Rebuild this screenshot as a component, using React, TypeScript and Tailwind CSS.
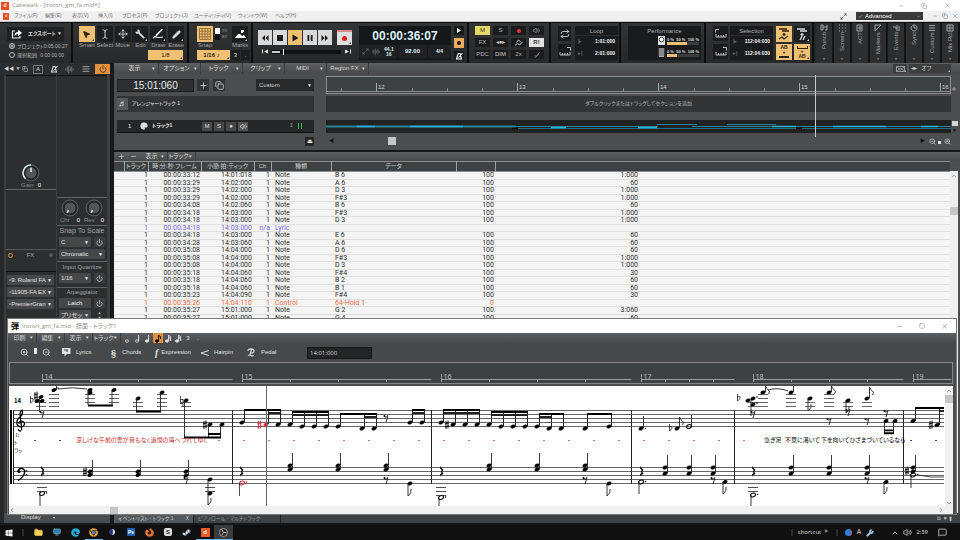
import React from "react";
import {
  AlignJustify, AudioLines, Check, ChevronDown, ChevronLeft, ChevronRight, ChevronUp, Copy, Folder,
  Maximize2, MessageSquare, Minus, Monitor, Move, MousePointer2, Palette, Pencil, Plus, Power, Repeat,
  Square, TextCursor, Volume2, Wrench, X, ZoomIn, ZoomOut,
} from "lucide-react";
import { FaSteamSymbol, FaFirefoxBrowser, FaEdge, FaChrome, FaWindows } from "react-icons/fa";

const amber = "bg-[#f0c073] text-[#2b2112]";
const dark = "bg-[#1d1e1f] text-[#dcdddd]";

/* ---------- shared bits ---------- */
function Corner() {
  return <span className="absolute right-px bottom-px size-0 border-b-2 border-l-2 border-b-current border-l-transparent" />;
}

function Module({ className = "", children }: { className?: string; children: React.ReactNode }) {
  return (
    <section className={`h-full shrink-0 border-r-2 border-[#0c0d0e] bg-linear-to-b from-[#323436] to-[#27282a] ${className}`}>
      {children}
    </section>
  );
}

function Drop({ label, w, value }: { label: string; w: string; value: string }) {
  return (
    <div className={`relative ${w}`}>
      <select aria-label={label} className="block h-[10px] w-full appearance-none rounded-[1px] bg-[#454748] py-0 pr-[8px] pl-[2px] text-[6px] leading-[10px] text-[#e4e4e4]">
        <option>{value}</option>
      </select>
      <span className="pointer-events-none absolute top-0 right-[2px] text-[5px] leading-[10px] text-[#eee]">▼</span>
    </div>
  );
}

/* ---------- application header ---------- */
function TitleBar() {
  return (
    <header className="flex h-[11px] shrink-0 items-center bg-white pr-[9px] pl-px text-[#8e8e8e]">
      <span className="mr-[3px] flex size-[8px] items-center justify-center bg-[#ee4d23] text-[5px] font-bold text-white">d</span>
      <h1 className="flex-1 font-['Open_Sans'] text-[6px] leading-[11px]">Cakewalk - [irotori_gm_fa.mid*]</h1>
      <div className="flex gap-[17px]">
        <button aria-label="Minimize"><Minus size={6} /></button>
        <button aria-label="Restore"><Copy size={6} /></button>
        <button aria-label="Close"><X size={7} /></button>
      </div>
    </header>
  );
}

const menus: [string, string][] = [
  ["ファイル(F)", "w-[31px]"], ["編集(E)", "w-[27px]"], ["表示(V)", "w-[26px]"], ["挿入(I)", "w-[24px]"],
  ["プロセス(P)", "w-[33px]"], ["プロジェクト(J)", "w-[39px]"], ["ユーティリティ(U)", "w-[44px]"],
  ["ウィンドウ(W)", "w-[37px]"], ["ヘルプ(H)", "w-[30px]"],
];

function MenuBar() {
  return (
    <nav className="flex h-[11px] shrink-0 items-center border-b border-[#c8c8c8] bg-[#f0f0f0] pr-[2px] pl-[3px] text-[5px] text-[#757575]">
      <span className="mr-[5px] flex h-[7px] w-[6px] items-center justify-center bg-[#ee4d23] text-[4px] text-white">d</span>
      {menus.map(([m, w]) => (
        <button key={m} className={`text-left whitespace-nowrap ${w}`}>{m}</button>
      ))}
      <Maximize2 size={7} className="mr-[9px] ml-auto text-[#333]" />
      <div className="relative mr-[9px] w-[67px]">
        <select aria-label="Workspace" className="block h-[8px] w-full appearance-none bg-[#3a3a3a] py-0 pl-[9px] text-[6px] leading-[8px] text-white">
          <option>Advanced</option>
        </select>
        <ChevronDown size={5} className="absolute top-[2px] right-[2px] text-[#ccc]" />
        <Check size={5} className="absolute top-[2px] left-[2px] text-white" />
      </div>
      <div className="flex gap-[4px] text-[#66859a]">
        <button aria-label="Minimize document"><Minus size={6} /></button>
        <button aria-label="Restore document"><Copy size={6} /></button>
        <button aria-label="Close document"><X size={6} /></button>
      </div>
    </nav>
  );
}

/* ---------- control bar ---------- */
function ExportModule() {
  return (
    <Module className="w-[73px] px-[7px] pt-[4px] text-[#d8d9da]">
      <button className="flex h-[14px] w-full items-center bg-[#1f2021] pr-[2px] pl-[4px] text-[5px]">
        <svg width="11" height="10" viewBox="0 0 11 10"><path d="M4 2H1.500v7H9V7" fill="none" stroke="#e8e8e8" strokeWidth="1.200" /><path d="M3.500 7q0-4 3.500-4V.500L11 4L7 7V5Q5 5 3.500 7z" fill="#fff" /></svg>
        <span className="ml-[6px] flex-1 text-left font-bold whitespace-nowrap">エクスポート</span>
        <span className="text-[5px]">▼</span>
      </button>
      {[["プロジェクト", "0:05:00:27"], ["選択範囲", "0:00:00:00"]].map(([a, b], i) => (
        <label key={a} className="mt-px flex h-[8px] items-center text-[5px] leading-[8px] whitespace-nowrap text-[#b5b5b5]">
          <input
            type="radio" name="range" defaultChecked={i === 0}
            className="mr-[2px] ml-[2px] size-[6px] shrink-0 appearance-none rounded-full border border-[#bbb] checked:bg-[#ddd] checked:shadow-[inset_0_0_0_1px_#222]"
          />
          <span>{a}</span>
          <span className="ml-auto">{b}</span>
        </label>
      ))}
    </Module>
  );
}

const tools = [
  { n: "Smart", i: <MousePointer2 size={9} fill="currentColor" /> },
  { n: "Select", i: <TextCursor size={10} /> },
  { n: "Move", i: <Move size={10} /> },
  { n: "Edit", i: <svg width="10" height="10" viewBox="0 0 10 10"><path d="M2.500 0.500L2.500 2.500L1 3L0.500 2.500Q0 5 3.500 4.800L8.500 9.800L9.800 8.500L4.800 3.500Q5 0.200 2.500 0.500Z" fill="currentColor" /></svg> },
  { n: "Draw", i: <svg width="11" height="10" viewBox="0 0 11 10"><path d="M9.500 0L4 6L3 7L3.400 5.500Z M0.500 9.500Q1 7 3 8T10 8" fill="none" stroke="currentColor" strokeWidth="1.200" /></svg> },
  { n: "Erase", i: <Pencil size={9} fill="currentColor" /> },
];

function ToolsModule() {
  return (
    <Module className="flex w-[116px] flex-col pt-[3px] pr-[2px] pl-[5px]">
      <div className="flex">
        {tools.map(({ n, i }, k) => (
          <div key={n} className="flex w-[18px] flex-col items-center">
            <button aria-label={n} className={`relative flex size-[16px] items-center justify-center ${k === 0 ? amber : dark}`}>
              {i}
              {k !== 1 && k !== 2 && <Corner />}
            </button>
            <span className="text-[6px] leading-[7px] text-[#a4a5a6]">{n}</span>
          </div>
        ))}
      </div>
      <button className={`relative mt-px mr-[2px] h-[10px] w-[35px] self-end text-[6px] leading-[10px] ${amber}`}>1/8<Corner /></button>
    </Module>
  );
}

function SnapModule() {
  return (
    <Module className="w-[64px] pt-[3px] pl-[8px] text-[#a4a5a6]">
      <div className="flex">
        <div className="w-[16px] text-center">
          <button aria-label="Snap to grid" className={`flex size-[16px] items-center justify-center ${amber}`}>
            <svg width="12" height="12" viewBox="0 0 12 12"><path d="M.5.5h11v11H.5zM3.2 0v12M6 0v12M8.8 0v12M0 3.2h12M0 6h12M0 8.8h12" fill="none" stroke="#9a7340" strokeWidth="1" /></svg>
          </button>
          <span className="block text-[6px] leading-[7px]">Snap</span>
        </div>
        <div className="mt-[2px] ml-[2px] h-[12px] w-[5px] bg-[#111]"><div className="h-[6px] bg-white" /></div>
        <div className="mt-[2px] ml-[2px] w-[8px] text-[4px] leading-[6px]">TO<br />BY</div>
        <div className="ml-[2px] w-[16px] text-center">
          <button aria-label="Marks" className={`relative flex size-[16px] items-center justify-center ${dark}`}>
            <svg width="11" height="10" viewBox="0 0 11 10"><path d="M0 9L3 5H5L7 7L9 6L11 9Z M6 1h3v2H8v1H6z" fill="#fff" /></svg>
            <Corner />
          </button>
          <span className="block text-[6px] leading-[7px]">Marks</span>
        </div>
      </div>
      <div className="mt-px flex gap-px text-[6px] leading-[10px]">
        <button className={`relative h-[10px] w-[33px] pr-[4px] font-bold ${amber}`}>1/16 ♪<Corner /></button>
        <button className={`h-[10px] w-[9px] ${dark}`}>3</button>
        <button className={`h-[10px] w-[9px] ${dark}`}>.</button>
      </div>
    </Module>
  );
}

function Metronome() {
  return <svg width="8" height="8" viewBox="0 0 8 8"><path d="M1.500 7L3.200 1.500H5L6.500 7ZM3.500 5.500L7.500 1" fill="none" stroke="currentColor" strokeWidth="1.100" /></svg>;
}

function Transport() {
  const pads: [string, string, string][] = [
    ["Rewind", "M1 4l3-3v6zM4.500 4l3-3v6z", "0"], ["Stop", "M1 1h6v6H1z", "0"], ["Play", "M1.500 0.500l6 3.500l-6 3.500z", "1"],
    ["Pause", "M1.500 1h1.800v6H1.500zM4.800 1h1.800v6H4.800z", "0"], ["Forward", "M.500 1l3 3l-3 3zM4 1l3 3l-3 3z", "0"],
  ];
  return (
    <Module className="flex w-[216px] pt-[3px] pl-[5px]">
      <div className="w-[101px] pt-[4px]">
        <div className="flex gap-px">
          {pads.map(([n, d, on]) => (
            <button key={n} aria-label={n} className={`flex h-[15px] w-[14px] items-center justify-center ${on === "1" ? "bg-[#f0c073]" : "bg-[#d9d9da]"}`}>
              <svg width="8" height="8" viewBox="0 0 8 8"><path d={d} fill="#1b1b1b" /></svg>
            </button>
          ))}
          <button aria-label="Record" className="relative ml-[4px] flex h-[15px] w-[15px] items-center justify-center border-t-2 border-[#d98b8b] bg-[#dedede] text-[#333]">
            <span className="size-[5px] rounded-full bg-[#e01b22]" /><Corner />
          </button>
        </div>
        <div className="mt-[4px] flex items-center text-[#e4e4e4]">
          <svg width="6" height="6" viewBox="0 0 6 6" className="ml-[4px]"><path d="M0 .500h1v4H0zM6 .500v4L2 2.500z" fill="currentColor" /></svg>
          <div className="mx-[4px] flex h-[4px] flex-1 items-center bg-[#0f1010]">
            <span className="h-[2px] w-[8px] bg-[#ccc]" /><span className="ml-[3px] h-[6px] w-px bg-white" />
          </div>
          <svg width="6" height="6" viewBox="0 0 6 6" className="mr-[8px]"><path d="M5 .500h1v4H5zM0 .500v4l4-2z" fill="currentColor" /></svg>
        </div>
      </div>
      <div className="h-[34px] w-[92px] bg-[#161718] text-[#d9f0f8]">
        <div className="pt-[3px] text-center text-[12px] leading-[15px] font-bold">00:00:36:07</div>
        <div className="mt-px flex h-[13px] items-center gap-px text-[6px] font-bold">
          <div className="flex h-full w-[38px] items-center bg-[#202122] pl-[3px]">
            <Maximize2 size={7} className="text-[#777]" /><AudioLines size={8} className="ml-[3px] text-[#777]" />
            <span className="ml-[4px] text-center text-[5px] leading-[5px]">44.1<br />16</span>
          </div>
          <div className="flex h-full w-[29px] items-center justify-center bg-[#202122] text-[6px]">92.00</div>
          <div className="flex h-full flex-1 items-center justify-center bg-[#202122] text-[5px]">4/4</div>
        </div>
      </div>
      <div className="ml-[3px] flex flex-col gap-[3px] text-[6px]">
        <button aria-label="Audition" className="flex h-[9px] w-[10px] items-center justify-center bg-[#18191a] text-white"><svg width="4" height="5"><path d="M0 0l4 2.500l-4 2.500z" fill="#fff" /></svg></button>
        <button aria-label="Click" className="flex h-[10px] w-[10px] items-center justify-center bg-[#e9ad5d]"><span className="size-[4px] rounded-full bg-[#111]" /></button>
        <button aria-label="Metronome" className="flex h-[9px] w-[10px] items-center justify-center bg-[#18191a] text-white"><Metronome /></button>
      </div>
    </Module>
  );
}

function MixModule() {
  const cells: [string, React.ReactNode][] = [
    ["Mute", "M"], ["Solo", "S"], ["Arm", <span className="size-[4px] rounded-full bg-[#e5322b]" />], ["Echo", <Volume2 size={7} />],
    ["FX", "FX"], ["Automation", "◂●▸"],
    ["Write", <svg width="9" height="8" viewBox="0 0 9 8"><path d="M1 6.500l2.500-2l2 1.500l3-3M2.500 3.500l2-2.500l2 1.500" fill="none" stroke="#ccc" /></svg>],
    ["R!", "R!"], ["PDC", "PDC"], ["Dim", "DIM"], ["2x", "2x"],
    ["Fade", <svg width="8" height="8" viewBox="0 0 8 8"><path d="M1 5h2L7 1M2 7l4-4" fill="none" stroke="#666" /></svg>],
  ];
  return (
    <Module className="grid w-[82px] grid-cols-[repeat(4,15px)] content-start gap-[3px] pt-[3px] pl-[6px]">
      {cells.map(([n, c]) => (
        <button
          key={n} aria-label={n}
          className={`flex h-[9px] items-center justify-center text-[6px] leading-[9px] ${n === "Mute" ? "bg-[#e4d968] text-[#333]" : n === "R!" ? "bg-[#e2e2e2] font-bold text-[#333]" : n === "Dim" || n === "Automation" ? "bg-[#1a1b1c] text-[4px] text-[#ccc]" : "bg-[#1a1b1c] text-[#b5b6b7]"}`}
        >
          {c}
        </button>
      ))}
    </Module>
  );
}

function RangeBox({ title, from, to }: { title: string; from: string; to: string }) {
  return (
    <div className="h-[34px] w-[43px] bg-[#1a1b1c]">
      <div className="h-[10px] border-b border-[#2e2f30] text-center text-[6px] leading-[10px] text-[#b0b1b2]">{title}</div>
      {[from, to].map((v, i) => (
        <div key={i} className="flex h-[12px] items-center justify-between px-[3px] text-[5px] font-bold text-[#f0f0f0]">
          <span className="text-[#666]">{i ? "▸|" : "|▸"}</span>{v}
        </div>
      ))}
    </div>
  );
}

function Bracket({ flip }: { flip?: boolean }) {
  return (
    <svg width="12" height="9" viewBox="0 0 12 9"><path d={flip ? "M1 5v3h10V5M3.500 6v2M6 6v2M8.500 6v2M8 .500h3.500v3" : "M1 5v3h10V5M3.500 6v2M6 6v2M8.500 6v2M.500 3.500V.500H4"} fill="none" stroke="#bbb" strokeWidth="1" /></svg>
  );
}

function Meter({ fill }: { fill: string }) {
  return (
    <div className="w-[32px]">
      <div className="flex justify-between text-[4px] leading-[5px] font-bold text-[#ddd]"><span>0 %</span><span>50 %</span><span>100 %</span></div>
      <div className="h-[3px] bg-[#3c3d3e]"><div className={`h-full bg-[#f0c073] ${fill}`} /></div>
    </div>
  );
}

const sideTabs = ["Punch", "Screen", "ACT", "Markers", "Events", "Sync", "Custom", "Mix Rcl"];
const tabIcons = [
  "M1 1h2v5H1zM7 1v5H5M3 3h4", "M1 1h1M4 1h1M7 1h1M1 4h1M4 4h1M7 4h1M1 7h1M4 7h1M7 7h1", "M1 1h5v6H1zM3 3h2v2H3z", "M1 1h6L1 7z",
  "M1 3h3v2M5 1v6M7 2v5", "M4 1a3 3 0 1 0 .1 0M4 1.500V4h2", "M1 1.500h6M1 4h6M1 6.500h6", "M1 1h6v6H1zM4 1v6M1 4h6",
];

function ControlBar() {
  return (
    <div className="flex h-[41px] shrink-0 overflow-hidden border-t border-[#0c0d0e] bg-[#1a1b1c]">
      <ExportModule />
      <ToolsModule />
      <SnapModule />
      <Transport />
      <MixModule />
      <Module className="flex w-[70px] gap-[4px] pt-[3px] pl-[7px]">
        <div className="flex w-[13px] flex-col gap-[3px]">
          <button aria-label="Loop" className="flex h-[15px] items-center justify-center bg-[#1a1b1c] text-[#ddd]"><Repeat size={10} /></button>
          <button aria-label="Set loop to selection" className="flex h-[15px] items-center justify-center bg-[#1a1b1c]"><Bracket flip /></button>
        </div>
        <RangeBox title="Loop" from="1:01:000" to="2:01:000" />
      </Module>
      <Module className="w-[85px] pt-[3px] pl-[7px]">
        <div className="h-[34px] w-[73px] bg-[#1a1b1c] px-[2px]">
          <div className="h-[10px] text-center text-[6px] leading-[10px] text-[#b0b1b2]">Performance</div>
          <div className="flex items-center gap-[2px] pr-px pl-[28px]">
            <div className="flex flex-col gap-[3px]">
              <svg width="7" height="9" viewBox="0 0 7 9"><path d="M0 0h7v9H0z" fill="#ddd" /><circle cx="3.500" cy="3.500" r="2.300" fill="#fff" stroke="#444" /></svg>
              <svg width="7" height="9" viewBox="0 0 7 9"><path d="M1 0h5v9H1z" fill="#aaa" /><path d="M0 1h7M0 3h7M0 5h7M0 7h7" stroke="#666" /></svg>
            </div>
            <div className="flex flex-col gap-[4px]"><Meter fill="w-[20px]" /><Meter fill="w-[10px]" /></div>
          </div>
        </div>
      </Module>
      <Module className="flex w-[108px] pt-[3px] pl-[7px]">
        <div className="mr-[2px] flex w-[15px] flex-col gap-[3px]">
          <button aria-label="Selection start" className="flex h-[15px] items-center justify-center bg-[#1a1b1c]"><Bracket /></button>
          <button aria-label="Selection end" className="flex h-[15px] items-center justify-center bg-[#1a1b1c]"><Bracket flip /></button>
        </div>
        <RangeBox title="Selection" from="112:04:030" to="112:04:030" />
        <div className="ml-[3px] grid grid-cols-[16px_16px] content-start gap-[2px]">
          {["M2 2h8M5 4h7M7 6v3M5.500 7.500h3M2 12l3-2l2 2l4-3", "M2 2h8M5 4h7M7 6v3M5.500 7.500h3M5 13l2-4M8 13l2-4"].map((d, i) => (
            <button key={i} aria-label={i ? "Automation off" : "Select tracks"} className={`relative flex size-[16px] items-center justify-center ${i ? dark : amber}`}>
              <svg width="14" height="14" viewBox="0 0 14 14"><path d={d} fill="none" stroke="currentColor" strokeWidth="1.300" /></svg>{i === 1 && <Corner />}
            </button>
          ))}
          <button className={`flex h-[16px] flex-col items-center justify-center text-[5px] leading-[5px] font-bold ${amber}`}>AB<span>+</span><span className="my-px h-[2px] w-[10px] bg-[#2b2112]" /></button>
          <button className={`relative flex h-[16px] flex-col items-center justify-center text-[5px] leading-[5px] font-bold ${amber}`}><span className="h-[3px] w-[11px] border-x border-b border-[#2b2112]" /><span>+</span>AB<Corner /></button>
        </div>
      </Module>
      <div className="flex min-w-0 flex-1 bg-[#262729] pl-[2px]">
        {sideTabs.map((t, i) => (
          <button key={t} className="flex w-[18px] shrink-0 flex-col items-center border-r-2 border-[#131415] bg-[#2c2e30] pt-px text-[#a2a3a4]">
            <svg width="8" height="8" viewBox="0 0 8 8"><path d={tabIcons[i]} fill="none" stroke="currentColor" /></svg>
            <span className="flex h-[25px] w-full rotate-180 items-center justify-end text-[6px] leading-[8px] whitespace-nowrap [writing-mode:vertical-rl]">{t}</span>
            <span className="text-[3px] leading-[4px]">▼</span>
          </button>
        ))}
      </div>
    </div>
  );
}

/* ---------- inspector ---------- */
function Knob({ label, angle }: { label: string; angle: "up" | "down" }) {
  return (
    <div className="w-[24px]">
      <svg width="24" height="18" viewBox="0 0 24 18">
        <circle cx="12" cy="9" r="8" fill="none" stroke="#5d6062" strokeWidth="1" />
        {angle === "up" && <path d="M6.500 14.700A8 8 0 0 1 12 1" fill="none" stroke="#d7eef5" strokeWidth="1.500" />}
        <circle cx="12" cy="9" r="6" fill="#535658" stroke="#1b1c1d" />
        <path d={angle === "up" ? "M12 3.500V8" : "M10.500 11L9 14"} stroke="#e8f6fa" strokeWidth="1.500" />
      </svg>
      <div className="flex justify-between px-[2px] text-[6px] leading-[7px] text-[#8c8d8e]"><span>{label}</span><span className="text-white">0</span></div>
    </div>
  );
}

function PowerBtn({ name }: { name: string }) {
  return <button aria-label={name} className="flex h-[10px] w-[11px] items-center justify-center bg-[#3a3c3d] text-[#eee]"><Power size={7} /></button>;
}

function Inspector() {
  return (
    <aside className="flex w-[112px] shrink-0 flex-col border-r-2 border-[#17181a] bg-[#3b3d3e] text-[6px]">
      <div className="flex h-[12px] items-center bg-[#2b2d2e] pl-[4px] text-[#d8d8d8]">
        <span className="flex w-[29px] items-center gap-[2px] text-[5px] whitespace-nowrap">◀◀ ▼<Copy size={6} /></span>
        <span className="flex w-[10px] items-center justify-center border border-[#777] text-[6px] leading-[7px]">A</span>
        <span className="ml-[7px]"><Metronome /></span>
        <AudioLines size={9} className="ml-[7px] text-[#888]" />
        <AlignJustify size={8} className="ml-[8px]" />
        <button aria-label="Inspector options" className="ml-[5px] flex h-[10px] w-[15px] items-center justify-center bg-[#e0913e] text-[#2b1c0c]"><Power size={8} /></button>
      </div>
      <div className="flex flex-1 gap-px border-l-4 border-[#26282a] pr-[3px] pl-[2px]">
        <div className="w-[50px] bg-[#2c2e30]">
          <div className="flex h-[115px] flex-col items-center justify-end border-t border-b border-[#0f1011] border-b-[#606263]">
            <Knob label="Gain" angle="up" />
          </div>
          <div className="h-[60px] border-b border-[#555]" />
          <div className="flex h-[22px] justify-between border-b border-[#111] px-[2px] pt-[2px] text-[#a5a6a7]">
            <span className="mt-px size-[5px] rounded-full border border-[#e0913e]" /><span className="leading-[7px]">FX</span><Plus size={6} />
          </div>
          <div className="flex flex-col gap-[2px] px-px pt-[3px]">
            {["9: Roland FA", "11905-FA EX", "PremierGran"].map((v) => <Drop key={v} label={v} value={"▫" + v} w="w-[47px]" />)}
          </div>
        </div>
        <div className="w-[50px] bg-[#2c2e30]">
          <div className="h-[123px] border-t border-b border-[#0f1011] border-b-[#606263]" />
          <div className="flex h-[28px] items-center justify-center border-b border-[#606263]"><Knob label="Chr" angle="down" /><Knob label="Rev" angle="down" /></div>
          <div className="flex h-[36px] flex-col gap-[2px] border-b border-[#606263] px-[2px]">
            <h2 className="h-[9px] text-center text-[7px] leading-[10px] whitespace-nowrap text-[#a5a5a5]">Snap To Scale</h2>
            <div className="flex justify-between"><Drop label="Root" value="C" w="w-[32px]" /><PowerBtn name="Snap to scale on" /></div>
            <Drop label="Scale" value="Chromatic" w="w-[46px]" />
          </div>
          <div className="flex h-[26px] flex-col gap-[2px] border-b border-[#606263] px-[2px]">
            <h2 className="h-[9px] text-center text-[6px] leading-[10px] whitespace-nowrap text-[#a5a5a5]">Input Quantize</h2>
            <div className="flex justify-between"><Drop label="Quantize" value="1/16" w="w-[32px]" /><PowerBtn name="Quantize on" /></div>
          </div>
          <div className="flex flex-col gap-[2px] px-[2px]">
            <h2 className="h-[8px] text-center text-[6px] leading-[9px] text-[#a5a5a5]">Arpeggiator</h2>
            <div className="flex justify-between"><button className="h-[10px] w-[32px] bg-[#454748] leading-[10px] text-[#eee]">Latch</button><PowerBtn name="Arpeggiator on" /></div>
            <div className="flex justify-between"><Drop label="Preset" value="プリセット.." w="w-[32px]" /><span className="w-[11px] text-center text-[4px] leading-[5px] text-[#bbb]">▲<br />▼</span></div>
          </div>
        </div>
      </div>
      <div className="h-[10px] border-l-4 border-[#26282a] bg-[#4a4c4d] pl-[17px] text-[6px] leading-[8px] text-[#ddd]">Display<span className="ml-[12px] text-[4px]">▾</span></div>
    </aside>
  );
}

/* ---------- tracks ---------- */
function MenuItem({ w, children }: { w: string; children: React.ReactNode }) {
  return (
    <button className={`flex h-full items-center border-r border-[#3a3c3d] pr-[3px] text-[6px] whitespace-nowrap text-[#d8d8d8] ${w}`}>
      <span className="flex-1 text-center">{children}</span><span className="text-[5px]">▾</span>
    </button>
  );
}

const bar = "flex items-center bg-linear-to-b from-[#5c5e60] to-[#47494a]";

function TrackRuler() {
  const ticks = Array.from({ length: 18 }, (_, i) => i);
  return (
    <svg width="100%" height="18" className="border border-[#8b8d8e] bg-[#3d4142]">
      <path d="M0 14.500H2000" stroke="#8b8d8e" />
      {ticks.map((i) => (
        <path key={i} d={`M${Math.round(14 + i * 35.25) + 0.5} 11V14`} stroke="#8b8d8e" />
      ))}
      {[12, 13, 14, 15, 16].map((m, i) => (
        <g key={m}>
          <path d={`M${49.5 + i * 141} 6V14`} stroke="#a5a7a8" />
          <text x={51 + i * 141} y="12" fontSize="6" fill="#d4d5d5">{m}</text>
        </g>
      ))}
    </svg>
  );
}

function TrackClip() {
  return (
    <svg width="100%" height="13" className="block bg-[#202223]">
      <path d="M0 6.500H190" stroke="#2c8296" strokeWidth="2" />
      <path d="M190 6.500H332M331 4.500H371M401 4.500H450M366 6.500H470M470 6.500H625" stroke="#2c8296" fill="none" />
      <path d="M190 8.500H625" stroke="#1e7186" />
      <path d="M31 6.500H49M84 6.500H137M225 7.500H240M312 7.500H331M446 6.500H470M507 6.500H560M595 6.500H612" stroke="#2bb4d8" strokeWidth="1.500" />
      <path d="M186 8.500h6M470 8.500h6" stroke="#000" strokeWidth="1.500" />
    </svg>
  );
}

function TrackView() {
  return (
    <section className="relative h-[87px] shrink-0 bg-[#4b4d4e]">
      <div className={`${bar} h-[11px] pl-[3px]`}>
        {["表示", "オプション", "トラック", "クリップ", "MIDI", "Region FX"].map((t) => <MenuItem key={t} w="w-[42px]">{t}</MenuItem>)}
        <button className="relative ml-auto flex h-[9px] w-[14px] items-center justify-center bg-[#3b3d3e] text-[#aaa]">
          <svg width="9" height="6" viewBox="0 0 9 6"><path d="M.500 .500v5h8v-5zM.500 5.500L4.500 2L8.500 5.500M.500 .500L4.500 4L8.500 .500" fill="none" stroke="currentColor" strokeWidth=".8" /></svg><Corner />
        </button>
        <button className="relative mr-[9px] ml-[2px] flex h-[9px] w-[42px] items-center gap-[4px] bg-[#3b3d3e] pl-[2px] text-[6px] text-[#c5c5c5]">◂▸<span>オフ</span><Corner /></button>
      </div>
      <div className="grid grid-cols-[197px_1fr] gap-x-[12px] pt-[2px] pr-[9px] pl-[3px]">
        <div className="flex h-[18px] items-center">
          <output className="h-[13px] w-[77px] border border-[#1d1e1f] bg-[#2d2f30] text-center text-[10px] leading-[11px] text-[#e8e8e8]">15:01:060</output>
          <button aria-label="Add track" className="ml-[3px] flex size-[12px] items-center justify-center bg-[#303233] text-[#ddd]"><Plus size={9} /></button>
          <button aria-label="Duplicate track" className="ml-[4px] flex size-[12px] items-center justify-center bg-[#303233] text-[#ddd]"><Copy size={9} /></button>
          <div className="relative ml-auto w-[58px]">
            <select aria-label="Track layout" className="block h-[12px] w-full appearance-none bg-[#28292b] py-0 pl-[3px] text-[6px] text-[#d5d5d5]"><option>Custom</option></select>
            <span className="pointer-events-none absolute top-0 right-[2px] text-[5px] leading-[12px] text-[#ddd]">▼</span>
          </div>
        </div>
        <TrackRuler />
        <div className="mt-[2px] flex h-[16px] items-center bg-[#333435] text-[6px] text-[#f0f0f0]">
          <span className="flex h-[12px] w-[11px] items-center justify-center bg-[#58595a] text-[8px]">♬</span>
          <span className="ml-[4px] text-[5px]">アレンジャートラック 1</span>
        </div>
        <div className="mt-[2px] flex h-[16px] items-center justify-center bg-[#333435] text-[5px] text-[#b4b5b6]">ダブルクリックまたはドラッグしてセクションを追加</div>
        <div className="mt-[8px] flex h-[13px] items-center border-b border-[#111] bg-[#242627] text-[6px] text-[#eee]">
          <span className="ml-[11px] w-[12px]">1</span><Palette size={8} fill="#ddd" color="#ddd" />
          <span className="ml-[4px] w-[50px] text-[5px] font-bold">トラック1</span>
          {["M", "S", "●"].map((c) => <button key={c} className="mr-[2px] h-[9px] w-[10px] bg-[#454748] text-[6px] leading-[9px] text-[#ddd]">{c}</button>)}
          <button aria-label="Input echo" className="flex h-[9px] w-[10px] items-center justify-center bg-[#555]"><Volume2 size={7} /></button>
          <span className="ml-auto text-[5px]">⌶</span>
          <span className="mr-[12px] ml-[5px] h-[6px] w-[4px] border-x border-[#35b755]" />
        </div>
        <div className="mt-[8px]"><TrackClip /></div>
        <div className="flex h-[16px] items-center justify-end"><button aria-label="Lock" className="flex size-[9px] items-center justify-center bg-[#252627] text-[6px] text-white">⏏</button></div>
        <div className="flex h-[16px] items-center text-[#111]">
          <span className="ml-[3px] text-[5px]">◀</span><span className="ml-[54px] size-[8px] bg-[#c4c4c4]" />
          <span className="ml-auto text-[5px]">▶</span>
          <ZoomOut size={7} className="ml-[4px] text-[#ddd]" /><span className="mt-[3px] ml-[2px] size-[3px] bg-[#ddd]" /><ZoomIn size={7} className="ml-[3px] text-[#ddd]" />
        </div>
      </div>
      <span className="absolute top-[12px] left-[701px] h-[62px] w-px bg-[#c9caca]" />
      <Plus size={6} className="absolute top-[23px] right-[3px] text-[#ddd]" />
      <span className="absolute top-[58px] right-[2px] h-[5px] w-[6px] bg-[#d5d5d5]" />
      <span className="absolute top-[64px] right-[3px] text-[5px] leading-[6px] text-[#111]">▼</span>
    </section>
  );
}

/* ---------- event list ---------- */
const events: string[][] = [
  ["00:00:33:12", "14:01:018", "1", "Note", "B 6", "100", "1:000"],
  ["00:00:33:29", "14:02:000", "1", "Note", "A 6", "100", "60"],
  ["00:00:33:29", "14:02:000", "1", "Note", "D 3", "100", "1:000"],
  ["00:00:33:29", "14:02:000", "1", "Note", "F#3", "100", "1:000"],
  ["00:00:34:08", "14:02:060", "1", "Note", "B 6", "100", "60"],
  ["00:00:34:18", "14:03:000", "1", "Note", "F#3", "100", "1:000"],
  ["00:00:34:18", "14:03:000", "1", "Note", "D 3", "100", "1:000"],
  ["00:00:34:18", "14:03:000", "n/a", "Lyric", "", "", ""],
  ["00:00:34:18", "14:03:000", "1", "Note", "E 6", "100", "60"],
  ["00:00:34:28", "14:03:060", "1", "Note", "A 6", "100", "60"],
  ["00:00:35:08", "14:04:000", "1", "Note", "D 6", "100", "60"],
  ["00:00:35:08", "14:04:000", "1", "Note", "F#3", "100", "1:000"],
  ["00:00:35:08", "14:04:000", "1", "Note", "D 3", "100", "1:000"],
  ["00:00:35:18", "14:04:060", "1", "Note", "F#4", "100", "30"],
  ["00:00:35:18", "14:04:060", "1", "Note", "B 2", "100", "60"],
  ["00:00:35:18", "14:04:060", "1", "Note", "B 1", "100", "60"],
  ["00:00:35:23", "14:04:090", "1", "Note", "F#4", "100", "30"],
  ["00:00:35:26", "14:04:110", "1", "Control", "64-Hold 1", "0", ""],
  ["00:00:35:27", "15:01:000", "1", "Note", "G 2", "100", "3:060"],
  ["00:00:35:27", "15:01:000", "1", "Note", "G 4", "100", "60"],
];

function Columns() {
  return (
    <colgroup>
      <col className="w-[10px]" /><col className="w-[24px]" /><col className="w-[53px]" /><col className="w-[53px]" /><col className="w-[17px]" />
      <col className="w-[60px]" /><col className="w-[125px]" /><col className="w-[39px]" /><col className="w-[143px]" /><col />
    </colgroup>
  );
}

function EventList() {
  const th = "h-[9px] border-l border-[#a0a2a3] p-0 text-center font-normal leading-[9px] whitespace-nowrap overflow-hidden";
  return (
    <section className="flex min-h-0 flex-1 flex-col border-t-2 border-[#17181a] bg-[#4b4d4e]">
      <div className={`${bar} h-[9px] shrink-0 text-[#ddd]`}>
        <button aria-label="Add event" className="ml-[4px]"><Plus size={7} /></button>
        <button aria-label="Remove event" className="mr-[5px] ml-[5px]"><Minus size={7} /></button>
        <MenuItem w="w-[26px]">表示</MenuItem><MenuItem w="w-[28px]">トラック</MenuItem>
      </div>
      <div className="flex min-h-0 flex-1">
        <div className="min-w-0 flex-1 bg-[#f4f4f4]">
          <table className="w-full table-fixed border-collapse text-[6px]">
            <Columns />
            <thead className="border-y border-[#8b8d8e] bg-[#3d4142] text-[#d4d4d4]">
              <tr>
                <th className="p-0" />
                {["トラック", "時:分:秒:フレーム", "小節:拍:ティック", "Ch", "種類", "データ", "", ""].map((h, i) => (
                  <th key={i} className={th} colSpan={i === 7 ? 2 : 1}>{h}</th>
                ))}
              </tr>
            </thead>
          </table>
          <table className="h-[150px] w-full table-fixed border-collapse font-['Roboto'] text-[7px] leading-[7px] text-[#2c2c2c]">
            <Columns />
            <tbody>
              {events.map((e, i) => (
                <tr key={i} className={`shadow-[inset_0_-1px_0_#e0e0e0] ${e[3] === "Lyric" ? "text-[#7a66dd]" : e[3] === "Control" ? "text-[#f06a40]" : ""}`}>
                  <td className="p-0" />
                  <td className="p-0 text-right">1</td>
                  <td className="p-0 pr-px text-right">{e[0]}</td>
                  <td className="p-0 pr-[2px] text-right">{e[1]}</td>
                  <td className="p-0 pr-px text-right">{e[2]}</td>
                  <td className="p-0 pl-[4px]">{e[3]}</td>
                  <td className="p-0 pl-[4px]">{e[4]}</td>
                  <td className="p-0 pr-px text-right">{e[5]}</td>
                  <td className="p-0 text-right">{e[6]}</td>
                  <td className="p-0" />
                </tr>
              ))}
            </tbody>
          </table>
        </div>
        <div className="mt-[10px] flex w-[8px] flex-col items-center bg-[#efefef] pt-[2px]">
          <ChevronUp size={6} color="#333" /><div className="mt-[28px] h-[8px] w-full bg-[#c6c6c6]" />
        </div>
        <div className="w-[2px] bg-[#4b4d4e]" />
      </div>
      <div className="flex h-[10px] shrink-0 items-center bg-[#3f4142] text-[5px] leading-[8px] whitespace-nowrap text-[#ccc]">
        <button className="flex h-full w-[80px] items-center justify-between border-r border-[#222] bg-[#55585a] px-[4px]"><span>イベントリスト - トラック 1</span><span>X</span></button>
        <button className="flex h-full w-[87px] items-center border-r border-[#222] pl-[4px] text-[#999]">ピアノロール - マルチトラック</button>
        <span className="mr-[8px] ml-auto text-[5px]">⧉ ▼ ⬍</span>
      </div>
    </section>
  );
}

/* ---------- score ---------- */
const Head = ({ x, y, c = "#000", half }: { x: number; y: number; c?: string; half?: boolean }) => (
  <ellipse cx={x} cy={y} rx="2.6" ry="1.8" transform={`rotate(-22 ${x} ${y})`} fill={half ? "none" : c} stroke={half ? c : "none"} strokeWidth="1" />
);
const Sharp = ({ x, y, c = "#000" }: { x: number; y: number; c?: string }) => (
  <path d={`M${x - 1} ${y - 4}v8M${x + 1} ${y - 4.5}v8M${x - 2.2} ${y - 1}l4.400-1.200M${x - 2.2} ${y + 2}l4.400-1.200`} stroke={c} strokeWidth="0.9" fill="none" />
);
const Flat = ({ x, y }: { x: number; y: number }) => (
  <path d={`M${x - 1.500} ${y - 5}v7q3.500-2.500 2.500-4t-2.500 0`} stroke="#222" strokeWidth="0.8" fill="none" />
);
const QuarterRest = ({ x, y }: { x: number; y: number }) => (
  <path d={`M${x - 1} ${y - 4}l2.500 3q-2 1.500 0.500 4q-3-1-2 2`} stroke="#000" strokeWidth="1.300" fill="none" />
);
const EighthRest = ({ x, y }: { x: number; y: number }) => (
  <g><circle cx={x - 1.500} cy={y - 2} r="1" /><path d={`M${x - 1.500} ${y - 1}q2 .5 3.500-1.500l-2 6.500`} stroke="#000" strokeWidth="0.8" fill="none" /></g>
);
const Line = ({ d, w = 1 }: { d: string; w?: number }) => <path d={d} stroke="#222" strokeWidth={w} fill="none" />;

/* One beamed group, stems up: note positions, beam height, span of the second beam. */
type Group = { n: [number, number][]; b: number; s?: [number, number] };
const trebleUp: Group[] = [
  { n: [[290, 424.5], [302, 426.5], [314, 426.5], [326, 426.5]], b: 412, s: [292, 329] },
  { n: [[338, 426.5], [362, 428.5], [374, 428.5]], b: 414, s: [364, 377] },
  { n: [[410, 422.5], [422, 422.5]], b: 410, s: [412, 425] },
  { n: [[441, 422.5], [453, 424.5], [465, 424.5], [477, 424.5]], b: 410, s: [443, 480] },
  { n: [[489, 424.5], [501, 426.5], [513, 426.5], [525, 426.5]], b: 412, s: [491, 528] },
  { n: [[537, 426.5], [549, 428.5], [561, 428.5]], b: 414, s: [539, 552] },
  { n: [[585, 428.5], [609, 426.5]], b: 414 },
  { n: [[242, 422.5], [278, 424.5]], b: 410, s: [268, 281] },
  { n: [[913, 421], [937, 425]], b: 408, s: [939, 944] },
];
/* Bass chords: x, upper head, lower head, stem top. */
const chords: [number, number, number, number][] = [
  [90, 471.5, 475, 460], [138, 471.5, 475, 460], [186, 471.5, 475.5, 460],
  [290, 465.5, 469.5, 453], [338, 465.5, 469.5, 453], [386, 465.5, 469.5, 453],
  [489, 465.5, 469.5, 453], [537, 465.5, 469.5, 453], [585, 465.5, 469.5, 453],
  [665, 467.5, 473.5, 455], [689, 467.5, 473.5, 455], [713, 467.5, 473.5, 455],
  [791, 467.5, 473.5, 455], [829, 467.5, 473.5, 455], [867, 467.5, 473.5, 455], [913, 467.5, 471.5, 455],
];
const flagDown = (x: number, y: number, end: number) => `M${x - 2} ${y}V${end}q4-3 3-7`;
const flagUp = (x: number, y: number, end: number) => `M${x + 2.500} ${y}V${end}q1 3 3 4t0 4`;
const ledgers = (x: number, ys: number[]) => ys.map((y) => `M${x - 5} ${y}h10`).join("");

function Score() {
  const dashes = Array.from({ length: 22 }, (_, i) => 219 + i * 25);
  return (
    <svg width="935" height="120" viewBox="9 386 935 120" className="block font-['Noto_Sans_CJK_JP']">
      <g shapeRendering="crispEdges">
        {[410.5, 414.5, 418.5, 422.5, 426.5, 467.5, 471.5, 475.5, 479.5, 483.5].map((y) => <path key={y} d={`M14 ${y}H944`} stroke="#666" />)}
        {[13.5, 232.5, 431.5, 631.5, 734.5, 903.5].map((x) => <path key={x} d={`M${x} 410V484`} stroke="#222" />)}
        <rect x="10" y="410" width="2" height="74" />
      </g>
      <path d="M21 431q-3 0-2.500-2M21 430q1 0 .5-3L20 414q0-3 2-4q1.500 3-1 6q-5 4-4 8q2 4 6 2.500q3-3 0-5q-4-1-4 2.500" fill="none" stroke="#000" strokeWidth="1.300" />
      <path d="M18 472q0-4 4-3.500q4 1 2 6q-2 4-6 6M26.500 470v1.500M26.500 474v1.500" fill="none" stroke="#000" strokeWidth="1.500" />
      <circle cx="19" cy="471.500" r="1.500" />
      <text x="14" y="403" fontSize="6" fontWeight="700">14</text>
      <g fontSize="5"><text x="15" y="437">1:</text><text x="14" y="444">ト</text><text x="14" y="452">ラッ</text></g>

      {/* measure 14, treble */}
      <Flat x={32} y={401} /><Sharp x={36} y={396} />
      {[[41, 397], [37, 401], [42, 401], [54, 390], [90, 390], [90, 393], [114, 390], [138, 398.5], [162, 392.5], [186, 400.5], [210, 424.5], [222, 424.5]].map(([x, y], i) => <Head key={i} x={x} y={y} />)}
      <Line d={ledgers(41, [402.5, 406.5]) + ledgers(54, [394.5, 398.5, 402.5, 406.5]) + ledgers(90, [394.5, 398.5, 402.5]) + ledgers(114, [394.5, 398.5, 402.5]) + ledgers(138, [402.5, 406.5]) + ledgers(162, [394.5, 398.5, 402.5, 406.5]) + ledgers(186, [402.5, 406.5])} w={0.7} />
      <Line d="M39.500 397V412M56.500 390V386M88 390V405M112 390V405M136.500 398V411M160.500 392V411M184.500 400V438M208.500 424V438M220.500 424V438M58 389Q72 386.500 87 389" w={0.9} />
      <path d="M88 404.500h25v2H88zM136 410.500h25v2h-25zM184 436.500h37v2h-37zM208 433h13v2h-13z" />
      <circle cx="58" cy="388" r=".8" /><EighthRest x={42} y={414} />
      <Line d="M180.500 396v8M183 399v8M180.500 399.500h2.500M180.500 403.500h2.500" w={0.8} /><Sharp x={205} y={425} />

      {/* beamed groups */}
      {trebleUp.map((g, i) => (
        <g key={i}>
          {g.n.map(([x, y]) => <g key={x}><Head x={x} y={y} /><Line d={`M${x + 2.500} ${y}V${g.b}`} /></g>)}
          <path d={`M${g.n[0][0] + 2} ${g.b - 1}H${i === 8 ? 944 : g.n[g.n.length - 1][0] + 3}v2H${g.n[0][0] + 2}z`} />
          {g.s && <path d={`M${g.s[0]} ${g.b + 2}H${g.s[1]}v2H${g.s[0]}z`} fill="#222" />}
        </g>
      ))}
      <Head x={266} y={424.5} c="#e03038" /><Sharp x={259.500} y={425} c="#e03038" /><path d="M268.500 424V410" stroke="#222" />
      <Sharp x={447} y={425} /><Sharp x={931} y={425} /><EighthRest x={386} y={418} />

      {/* measure 17 */}
      <Head x={641} y={428.5} /><circle cx="645.500" cy="428.500" r=".8" /><Flat x={671} y={429} /><Head x={677} y={428.5} /><Head x={689} y={426.5} half />
      <Line d={"M643.500 428V416M691.500 426V415" + flagUp(677, 428, 417)} w={0.9} />

      {/* measure 18 */}
      <Flat x={739} y={399} />
      {[[748, 400.5], [753, 398.5], [753, 404.5], [763, 392.5], [791, 392.5], [810, 398.5], [829, 392.5], [848, 400.5], [867, 398.5], [886, 421], [895, 421]].map(([x, y], i) => <Head key={i} x={x} y={y} />)}
      <Line d={[763, 791, 829].map((x) => ledgers(x, [394.5, 398.5, 402.5, 406.5])).join("") + [753, 810, 848, 867].map((x) => ledgers(x, [402.5, 406.5])).join("")} w={0.7} />
      <Line d={"M751 400V416M793.500 392V386M768 390Q778 387 788 391M884.500 421V434M893.500 421V434" + flagUp(763, 392, 386) + flagUp(829, 392, 386) + flagUp(867, 398, 387) + flagDown(810, 398, 411) + flagDown(848, 400, 413)} w={0.9} />
      <path d="M884 429.500h10v1.800h-10zM884 432.300h10v2h-10z" />
      <circle cx="757" cy="397" r=".8" /><circle cx="757" cy="403" r=".8" />
      {[[753, 414], [829, 421], [867, 421], [886, 413], [848, 412]].map(([x, y]) => <EighthRest key={x} x={x} y={y} />)}

      {/* bass */}
      {[42, 241, 441, 641, 753].map((x) => <QuarterRest key={x} x={x} y={471} />)}
      {chords.map(([x, a, b, t]) => <g key={x}><Head x={x} y={a} /><Head x={x} y={b} /><Line d={`M${x + 2.500} ${b}V${t}`} w={0.9} /></g>)}
      <Sharp x={85} y={472} /><Sharp x={907} y={471} />
      {[186, 386, 585, 713, 867].map((x) => <EighthRest key={x} x={x} y={480} />)}
      {[[210, 479.5], [210, 493.5], [410, 483.5], [609, 483.5], [725, 482], [886, 482]].map(([x, y], i) => <Head key={i} x={x} y={y} />)}
      <Line d={flagDown(210, 480, 505) + flagDown(410, 484, 496) + flagDown(609, 484, 496) + flagDown(725, 482, 494) + flagDown(886, 482, 494)} w={0.9} />
      {[[42, 493.5, 506], [441, 497.5, 506], [641, 482, 494], [753, 495, 506], [913, 475, 488]].map(([x, y, e]) => (
        <g key={x}><Head x={x} y={y} half /><circle cx={x + 4.500} cy={y - 0.5} r=".8" /><Line d={`M${x - 2} ${y}V${e}`} w={0.9} /></g>
      ))}
      <Head x={242} y={483} half c="#e03038" /><circle cx="246.500" cy="482" r=".8" fill="#e03038" /><Line d="M239.500 483V496M918 475Q930 478 944 477" w={0.8} />
      <Line d={ledgers(42, [487.5, 491.5]) + ledgers(210, [487.5, 491.5]) + ledgers(441, [487.5, 491.5, 495.5]) + ledgers(753, [487.5, 491.5])} w={0.8} />

      {/* lyrics */}
      {[35, 60, 911, 936].map((x) => <path key={x} d={`M${x - 1} 440.500h2`} stroke="#444" />)}
      {dashes.map((x) => <path key={x} d={`M${x - 1} 440.500h2`} stroke="#d86a6a" />)}
      <g fontSize="6" className="[font-feature-settings:'palt']">
        <text x="76" y="442" fill="#c23030">涼しげな午前の雲が</text><text x="129" y="442" fill="#c23030">音もなく追憶の海へつれてゆく</text>
        <text x="764" y="442">急ぎ足</text><text x="785" y="442">不意に渇いて</text><text x="821" y="442">下を向いてひざまづいているなら</text>
      </g>
      <path d="M266.500 386V506" stroke="#666" shapeRendering="crispEdges" />
    </svg>
  );
}

function ScoreRuler() {
  const measures: [number, number, number[], number][] = [
    [14, 42, [90, 138, 186], 232], [15, 242, [290, 338, 386], 431], [16, 441, [489, 537, 585], 631],
    [17, 641, [665, 689, 713], 734], [18, 753, [791, 829, 867], 903], [19, 913, [], 951],
  ];
  return (
    <svg width="100%" height="22" className="block border border-[#85878a] bg-[#3d4142]">
      {measures.map(([m, x, minor, end]) => (
        <g key={m} transform="translate(-9.5 -363)" stroke="#9b9d9e" fill="none">
          <path d={`M${x} 379.500H${end}M${x} 374V382`} />
          {minor.map((t) => <path key={t} d={`M${t} 380V382`} />)}
          <text x={x + 2} y="379" fontSize="7" stroke="none" fill="#c4c5c6" className="font-['Open_Sans']">{m}</text>
        </g>
      ))}
    </svg>
  );
}

function Note({ flags, open, stem = true }: { flags: number; open?: boolean; stem?: boolean }) {
  return (
    <svg width="8" height="9" viewBox="0 0 8 9">
      <ellipse cx="3" cy="7" rx="1.600" ry="1.200" fill={open ? "none" : "currentColor"} stroke="currentColor" strokeWidth=".8" />
      {stem && <path d="M4.600 7V1" stroke="currentColor" />}
      {flags > 0 && <path d="M4.600 1q3 2 2 4" stroke="currentColor" fill="none" />}
      {flags > 1 && <path d="M4.600 3q3 2 2 4" stroke="currentColor" fill="none" />}
    </svg>
  );
}

function ScoreWindow() {
  const cell = "flex h-[10px] w-[10px] items-center justify-center";
  return (
    <section aria-label="Staff view" className="absolute top-[318px] right-[3px] left-[7px] flex h-[197px] flex-col border border-[#77797a] bg-[#4b4d4e] text-[6px] text-[#e0e0e0]">
      <header className="flex h-[14px] shrink-0 items-center bg-white pr-[8px] pl-[3px] text-[#8e8e8e]">
        <span className="mr-[3px] w-[8px] text-[8px] leading-[9px] font-bold text-black">弾</span>
        <h2 className="flex-1 font-['Open_Sans','Noto_Sans_CJK_JP'] text-[6px]">irotori_gm_fa.mid - 譜面 - トラック1</h2>
        <div className="flex gap-[16px]">
          <button aria-label="Minimize staff view"><Minus size={7} /></button><button aria-label="Maximize staff view"><Square size={6} /></button><button aria-label="Close staff view"><X size={7} /></button>
        </div>
      </header>
      <div className={`${bar} h-[10px] shrink-0 pl-px`}>
        {["印刷", "編集", "表示", "トラック"].map((t) => <MenuItem key={t} w="w-[28px]">{t}</MenuItem>)}
        <div className="ml-[2px] flex">
          <button aria-label="Whole note" className={cell}><Note flags={0} open stem={false} /></button>
          <button aria-label="Half note" className={cell}><Note flags={0} open /></button>
          <button aria-label="Quarter note" className={cell}><Note flags={0} /></button>
          <button aria-label="Eighth note" className={`${cell} bg-[#e0913e] text-black`}><Note flags={1} /></button>
          <button aria-label="Sixteenth note" className={cell}><Note flags={2} /></button>
          <button aria-label="Thirty-second note" className={cell}><Note flags={2} /></button>
          <button className={cell}>3</button><button className={cell}>.</button>
        </div>
      </div>
      <div className="flex h-[19px] shrink-0 items-center bg-[#464849] pl-[12px]">
        <button aria-label="Zoom in"><ZoomIn size={9} /></button>
        <span className="mx-[5px] -mt-[4px] h-[6px] w-[3px] bg-[#e6e6e6]" />
        <button aria-label="Zoom out"><ZoomOut size={9} /></button>
        <button className="ml-[11px] flex w-[49px] items-center gap-[5px]">
          <svg width="9" height="9" viewBox="0 0 9 9"><path d="M0 0h8.500v6H5L2.500 8.500V6H0z" fill="#e0e0e0" /><path d="M2 2h4M5 4V2" stroke="#444" /></svg>Lyrics
        </button>
        <button className="flex w-[44px] items-center gap-[6px]"><span className="text-[9px] leading-[10px] font-bold">§</span>Chords</button>
        <button className="flex w-[45px] items-center gap-[3px]"><span className="font-['Liberation_Serif'] text-[10px] leading-[10px] font-bold italic">f</span>Expression</button>
        <button className="flex w-[47px] items-center gap-[5px]"><svg width="9" height="6" viewBox="0 0 9 6"><path d="M9 .500L1 3l8 2.500" fill="none" stroke="#ddd" /></svg>Hairpin</button>
        <button className="flex w-[60px] items-center gap-[6px]">
          <svg width="8" height="9" viewBox="0 0 8 9"><path d="M1 3Q1 .800 4 .800T7 3T4 5M4.500 1L3 7M1 7.500q1.500-1 3 0t2.500-.5" fill="none" stroke="#ddd" strokeWidth="1.200" /></svg>Pedal
        </button>
        <input aria-label="Position" readOnly value="14:01:000" className="h-[12px] w-[65px] border border-[#17181a] bg-[#222425] px-[2px] font-['Open_Sans'] text-[6px] text-[#dcdcdc]" />
      </div>
      <div className="shrink-0 pr-[3px] pl-px"><ScoreRuler /></div>
      <div className="mt-[2px] mr-[3px] ml-px flex min-h-0 flex-1 flex-col bg-white">
        <div className="flex min-h-0 flex-1 justify-between">
          <div className="min-w-0 flex-1 overflow-hidden"><Score /></div>
          <div className="flex w-[8px] shrink-0 flex-col items-center bg-[#f0f0f0] pt-[2px]">
            <ChevronUp size={6} color="#333" /><div className="mt-px h-[8px] w-full bg-[#c6c6c6]" /><ChevronDown size={6} color="#333" className="mt-auto" />
          </div>
        </div>
        <div className="flex h-[8px] shrink-0 items-center bg-[#f0f0f0] pr-[9px]">
          <ChevronLeft size={6} color="#333" /><div className="ml-[95px] h-[7px] w-[8px] bg-[#c6c6c6]" /><ChevronRight size={6} color="#333" className="ml-auto" />
        </div>
      </div>
    </section>
  );
}

/* ---------- taskbar ---------- */
function Taskbar() {
  const apps: [string, React.ReactNode][] = [
    ["Explorer", <Folder size={9} fill="#f6cf5c" color="#e9b63a" />],
    ["Monitor", <Monitor size={8} fill="#2e7fb8" color="#8aa" />],
    ["Edge", <FaEdge size={9} color="#2aa9d8" />],
    ["Chrome", (
      <span className="relative flex size-[9px] items-center justify-center">
        <FaChrome size={9} color="#e5a53a" /><span className="absolute size-[3px] rounded-full bg-[#3f86ee]" />
      </span>
    )],
    ["Eclipse", <span className="size-[6px] rounded-full border-r-2 border-[#dde] bg-[#34307a]" />],
    ["Photoshop", <span className="size-[8px] bg-[#1d5fae] text-center text-[5px] leading-[8px] font-bold text-white">Ps</span>],
    ["Firefox", <FaFirefoxBrowser size={9} color="#f0762e" />],
    ["Studio", <span className="flex h-[8px] w-[8px] items-center justify-center rounded-[2px] bg-[#ddd] text-[6px] font-bold text-[#222]">S</span>],
    ["Steam", <FaSteamSymbol size={9} color="#c9dcec" />],
    ["Cakewalk", <span className="size-[9px] bg-[#ee5a23] text-center text-[6px] leading-[9px] font-bold text-white">d</span>],
    ["OBS", <svg width="9" height="9" viewBox="0 0 9 9"><circle cx="4.500" cy="4.500" r="4" fill="#222" stroke="#bbb" strokeWidth=".8" /><path d="M4.500 4.500L3 1.500M4.500 4.500h3M4.500 4.500L3 7" stroke="#bbb" /></svg>],
  ];
  return (
    <footer className="flex h-[15px] shrink-0 items-center bg-[#101010] pr-[13px] pl-[5px] text-[7px] text-[#ddd]">
      <button aria-label="Start"><FaWindows size={8} color="#fff" /></button>
      <span className="mr-[5px] ml-[9px] h-[7px] w-[2px] bg-[#2b2b2b]" />
      <div className="grid h-full w-[204px] grid-cols-11">
        {apps.map(([n, icon]) => (
          <button key={n} aria-label={n} className={`flex items-center justify-center border-b ${n === "OBS" ? "border-[#79b7e8] bg-[#3a3a3a]" : n === "Chrome" || n === "Cakewalk" ? "border-[#79b7e8]" : "border-transparent"}`}>{icon}</button>
        ))}
      </div>
      <div className="ml-auto flex items-center font-['Open_Sans']">
        <span className="mr-[5px] h-[7px] w-[2px] bg-[#2b2b2b]" /><span className="text-[6px]">shortcut</span><span className="-mt-[3px] ml-[3px]">»</span>
        <span className="mr-[7px] ml-[8px] h-[7px] w-[2px] bg-[#2b2b2b]" />
        <span className="size-[7px] rounded-full border-r border-[#e05050] bg-[#2b7fe0]" /><span className="mx-[5px]">A</span><Wrench size={8} color="#9cc8ec" fill="#9cc8ec" />
        <ChevronUp size={8} className="ml-[17px]" /><Volume2 size={9} className="mx-[4px]" /><time className="text-[6px]">2:39</time><MessageSquare size={9} className="ml-[10px]" />
      </div>
    </footer>
  );
}

export default function App() {
  return (
    <main className="relative flex h-screen flex-col overflow-hidden bg-[#17181a] font-['Liberation_Sans','Noto_Sans_CJK_JP',sans-serif] [font-feature-settings:'palt']">
      <TitleBar />
      <MenuBar />
      <ControlBar />
      <div className="flex min-h-0 flex-1 border-b-2 border-[#17181a]">
        <Inspector />
        <div className="flex min-w-0 flex-1 flex-col border-l-2 border-[#17181a]">
          <TrackView />
          <EventList />
        </div>
      </div>
      <Taskbar />
      <ScoreWindow />
    </main>
  );
}
